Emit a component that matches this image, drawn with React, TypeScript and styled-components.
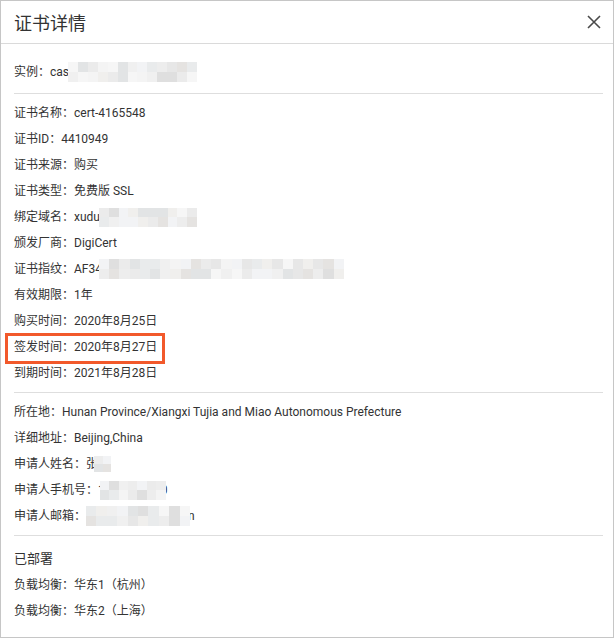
import React from "react";
import styled, { createGlobalStyle } from "styled-components";

const GlobalStyle = createGlobalStyle`
  html, body {
    margin: 0;
    padding: 0;
    background: #fff;
  }
  body {
    font-family: Roboto, "Noto Sans CJK SC", sans-serif;
    color: #333;
  }
`;

const Dialog = styled.div`
  box-sizing: border-box;
  width: 614px;
  height: 638px;
  border: 1px solid #c6c6c6;
  background: #fff;
  display: flex;
  flex-direction: column;
`;

const Header = styled.div`
  height: 42px;
  border-bottom: 1px solid #dadada;
  display: flex;
  align-items: center;
  justify-content: space-between;
  padding: 0 12px 0 13px;
`;

const Title = styled.div`
  font-family: "Noto Sans CJK SC", sans-serif;
  font-size: 18px;
  color: #333;
`;

const CloseButton = styled.button`
  border: 0;
  background: transparent;
  padding: 0;
  width: 14px;
  height: 14px;
  display: flex;
  cursor: pointer;
  color: #4a4a4a;
`;

const Body = styled.div`
  padding: 0 10px 0 13px;
`;

const Section = styled.div<{ $top: number; $bottom: number; $last?: boolean }>`
  padding: ${(p) => p.$top}px 0 ${(p) => p.$bottom}px;
  border-bottom: ${(p) => (p.$last ? "none" : "1px solid #dedede")};
`;

const Row = styled.div`
  position: relative;
  height: 26px;
  line-height: 26px;
  font-size: 12px;
  white-space: nowrap;
  display: flex;
  align-items: center;
`;

const Mark = styled.div`
  position: absolute;
  left: -9px;
  top: -1px;
  width: 160px;
  height: 31px;
  box-sizing: border-box;
  border: 3px solid #f2592b;
  pointer-events: none;
`;

const MosaicBox = styled.span<{ $ml: number; $mr: number }>`
  position: relative;
  z-index: 1;
  display: inline-grid;
  grid-auto-flow: row;
  margin-left: ${(p) => p.$ml}px;
  margin-right: ${(p) => p.$mr}px;
`;

const MosaicRow = styled.span`
  display: flex;
`;

const Cell = styled.span`
  display: block;
  flex: 1 1 0;
`;

const shades = [
  "#f0f0f0", "#ebebeb", "#f4f4f4", "#e7e7e7", "#ededed", "#f6f6f6",
  "#e2e4e5", "#e9ebec", "#f0efed", "#e5e3e1", "#f2f3f5", "#dfdfdf",
];

function Mosaic({
  width,
  height,
  cols,
  rows = 2,
  seed,
  ml = 0,
  mr = 0,
}: {
  width: number;
  height: number;
  cols: number;
  rows?: number;
  seed: number;
  ml?: number;
  mr?: number;
}) {
  let s = seed;
  const next = () => {
    s = (s * 9301 + 49297) % 233280;
    return s / 233280;
  };
  return (
    <MosaicBox $ml={ml} $mr={mr} style={{ width, height }}>
      {Array.from({ length: rows }).map((_, r) => (
        <MosaicRow key={r} style={{ height: height / rows }}>
          {Array.from({ length: cols }).map((_, c) => (
            <Cell
              key={c}
              style={{ background: shades[Math.floor(next() * shades.length)] }}
            />
          ))}
        </MosaicRow>
      ))}
    </MosaicBox>
  );
}

const Heading = styled.div`
  height: 26px;
  line-height: 26px;
  font-size: 13px;
`;

const CloseIcon = () => (
  <svg width="14" height="14" viewBox="0 0 14 14">
    <path d="M1 1 L13 13 M13 1 L1 13" stroke="currentColor" strokeWidth="1.6" fill="none" />
  </svg>
);

const App: React.FC = () => {
  return (
    <>
      <GlobalStyle />
      <Dialog>
        <Header>
          <Title>证书详情</Title>
          <CloseButton aria-label="关闭">
            <CloseIcon />
          </CloseButton>
        </Header>
        <Body>
          <Section $top={15} $bottom={8}>
            <Row>
              实例：cas
              <Mosaic width={129} height={20} cols={13} seed={7} ml={-1} />
            </Row>
          </Section>

          <Section $top={6} $bottom={6}>
            <Row>证书名称：cert-4165548</Row>
            <Row>证书ID：4410949</Row>
            <Row>证书来源：购买</Row>
            <Row>证书类型：免费版 SSL</Row>
            <Row>
              绑定域名：xudu
              <Mosaic width={98} height={19} cols={10} seed={23} ml={-1} />
            </Row>
            <Row>颁发厂商：DigiCert</Row>
            <Row>
              证书指纹：AF34
              <Mosaic width={245} height={20} cols={24} seed={41} ml={-3} />
            </Row>
            <Row>有效期限：1年</Row>
            <Row>购买时间：2020年8月25日</Row>
            <Row>
              签发时间：2020年8月27日
              <Mark />
            </Row>
            <Row>到期时间：2021年8月28日</Row>
          </Section>

          <Section $top={6} $bottom={6}>
            <Row>所在地：Hunan Province/Xiangxi Tujia and Miao Autonomous Prefecture</Row>
            <Row>详细地址：Beijing,China</Row>
            <Row>
              申请人姓名：张
              <Mosaic width={17} height={16} cols={2} seed={5} ml={-4} />
            </Row>
            <Row>
              申请人手机号：1
              <Mosaic width={66} height={19} cols={7} seed={17} ml={-5} mr={-5} />
              0
            </Row>
            <Row>
              申请人邮箱：
              <Mosaic width={104} height={20} cols={10} seed={61} mr={-2} />
              n
            </Row>
          </Section>

          <Section $top={10} $bottom={0} $last>
            <Heading>已部署</Heading>
            <Row>负载均衡：华东1（杭州）</Row>
            <Row>负载均衡：华东2（上海）</Row>
          </Section>
        </Body>
      </Dialog>
    </>
  );
};

export default App;
